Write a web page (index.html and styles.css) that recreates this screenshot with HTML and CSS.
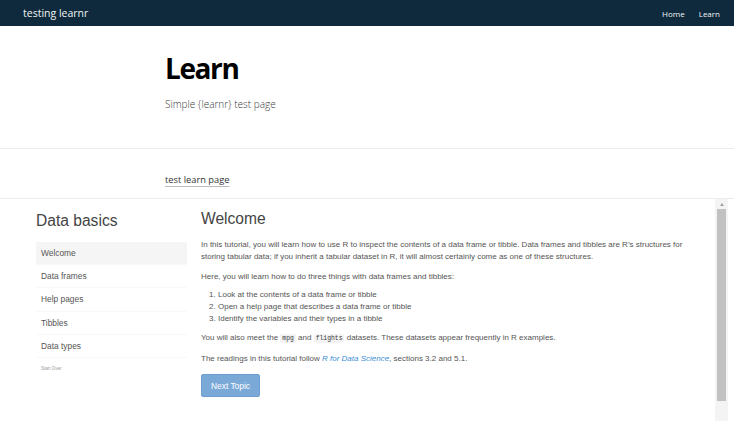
FILE: index.html
```html
<!DOCTYPE html>
<html>
<head>
<meta charset="utf-8">
<link rel="stylesheet" href="styles.css">
</head>
<body>
<nav class="topbar">
  <span class="brand">testing learnr</span>
  <div class="links"><a>Home</a><a>Learn</a></div>
</nav>
<header class="hero">
  <h1 class="hero-title">Learn</h1>
  <p class="hero-sub">Simple {learnr} test page</p>
</header>
<div class="crumb"><a class="crumb-link">test learn page</a></div>
<div class="frame">
  <aside class="side">
    <h2 class="side-title">Data basics</h2>
    <ul class="topics">
      <li class="topic active">Welcome</li>
      <li class="topic">Data frames</li>
      <li class="topic">Help pages</li>
      <li class="topic">Tibbles</li>
      <li class="topic">Data types</li>
    </ul>
    <div class="startover">Start Over</div>
  </aside>
  <main class="content">
    <h2 class="content-title">Welcome</h2>
    <p class="para">In this tutorial, you will learn how to use R to inspect the contents of a data frame or tibble. Data frames and tibbles are R’s structures for storing tabular data; if you inherit a tabular dataset in R, it will almost certainly come as one of these structures.</p>
    <p class="para">Here, you will learn how to do three things with data frames and tibbles:</p>
    <ol class="steps">
      <li>Look at the contents of a data frame or tibble</li>
      <li>Open a help page that describes a data frame or tibble</li>
      <li>Identify the variables and their types in a tibble</li>
    </ol>
    <p class="para">You will also meet the <code class="code">mpg</code> and <code class="code">flights</code> datasets. These datasets appear frequently in R examples.</p>
    <p class="para">The readings in this tutorial follow <a class="ref">R for Data Science</a>, sections 3.2 and 5.1.</p>
    <button class="next">Next Topic</button>
  </main>
  <div class="scrollbar">
    <div class="arrow"></div>
    <div class="thumb"></div>
  </div>
</div>
</body>
</html>
```
FILE: styles.css
```css
html, body { margin: 0; padding: 0; background: #fff; }
body { font-family: "Open Sans", "Noto Sans", sans-serif; height: 421px; overflow: hidden; }

.topbar {
  height: 26px;
  background: #0e2a3c;
  display: flex;
  align-items: center;
  justify-content: space-between;
  padding: 0 14px 0 23px;
  color: #fff;
}
.brand { font-size: 10.5px; color: #f2f4f5; }
.links { display: flex; gap: 14px; font-size: 8px; }
.links a { color: #f2f4f5; }

.hero {
  height: 123px;
  padding-left: 165px;
  border-bottom: 1px solid #ececec;
  box-sizing: border-box;
  display: flex;
  flex-direction: column;
}
.hero-title { margin: 25px 0 0; font-size: 28px; font-weight: 700; line-height: 34px; color: #000; letter-spacing: -1.4px; }
.hero-sub { margin: 12px 0 0; font-size: 10px; color: #3a3a3a; font-weight: 300; }

.crumb {
  height: 50px;
  box-sizing: border-box;
  padding: 17px 0 0 165px;
  border-bottom: 1px solid #ececec;
}
.crumb-link { font-size: 9.3px; color: #333; text-decoration: underline; text-decoration-color: #bbb; text-underline-offset: 3px; }

.frame {
  display: flex;
  height: 222px;
  font-family: "Liberation Sans", Arial, sans-serif;
  color: #555;
}
.side { width: 151px; margin-left: 36px; }
.side-title { margin: 13px 0 12px; font-size: 15.6px; font-weight: 400; line-height: 18px; color: #444; }
.topics { list-style: none; margin: 0; padding: 0; }
.topic { height: 23.2px; line-height: 23px; padding-left: 5px; font-size: 8.4px; color: #555; border-bottom: 1px solid #f8f8f8; box-sizing: border-box; }
.topic.active { background: #f5f5f5; }
.startover { font-size: 4.5px; color: #999; margin: 8px 0 0 5px; }

.content { flex: 1; margin-left: 14px; font-size: 8px; line-height: 12px; }
.content-title { margin: 10px 0 10px; font-size: 15.6px; font-weight: 400; line-height: 20px; color: #444; }
.para { margin: 0 0 8px; max-width: 490px; }
.steps { margin: -2px 0 7px; padding-left: 17px; }
.code { font-family: "Liberation Mono", monospace; font-size: 6.4px; background: #f3f3f3; padding: 1px 2px; border-radius: 2px; color: #333; }
.ref { color: #3d8fd6; font-style: italic; }
.next {
  margin-top: 1px;
  width: 59px; height: 23px;
  background: #7aa9d8;
  border: 1px solid #6d9fd1;
  border-radius: 2px;
  color: #fff;
  font-family: "Liberation Sans", Arial, sans-serif;
  font-size: 8.4px;
  padding: 0;
}

.scrollbar { width: 13px; margin-right: 6px; background: #f4f4f4; display: flex; flex-direction: column; align-items: center; }
.arrow { width: 0; height: 0; margin: 4px 0 3px; border-left: 2.5px solid transparent; border-right: 2.5px solid transparent; border-bottom: 3px solid #a3a3a3; }
.thumb { width: 9px; height: 192px; background: #c1c1c1; }
```
